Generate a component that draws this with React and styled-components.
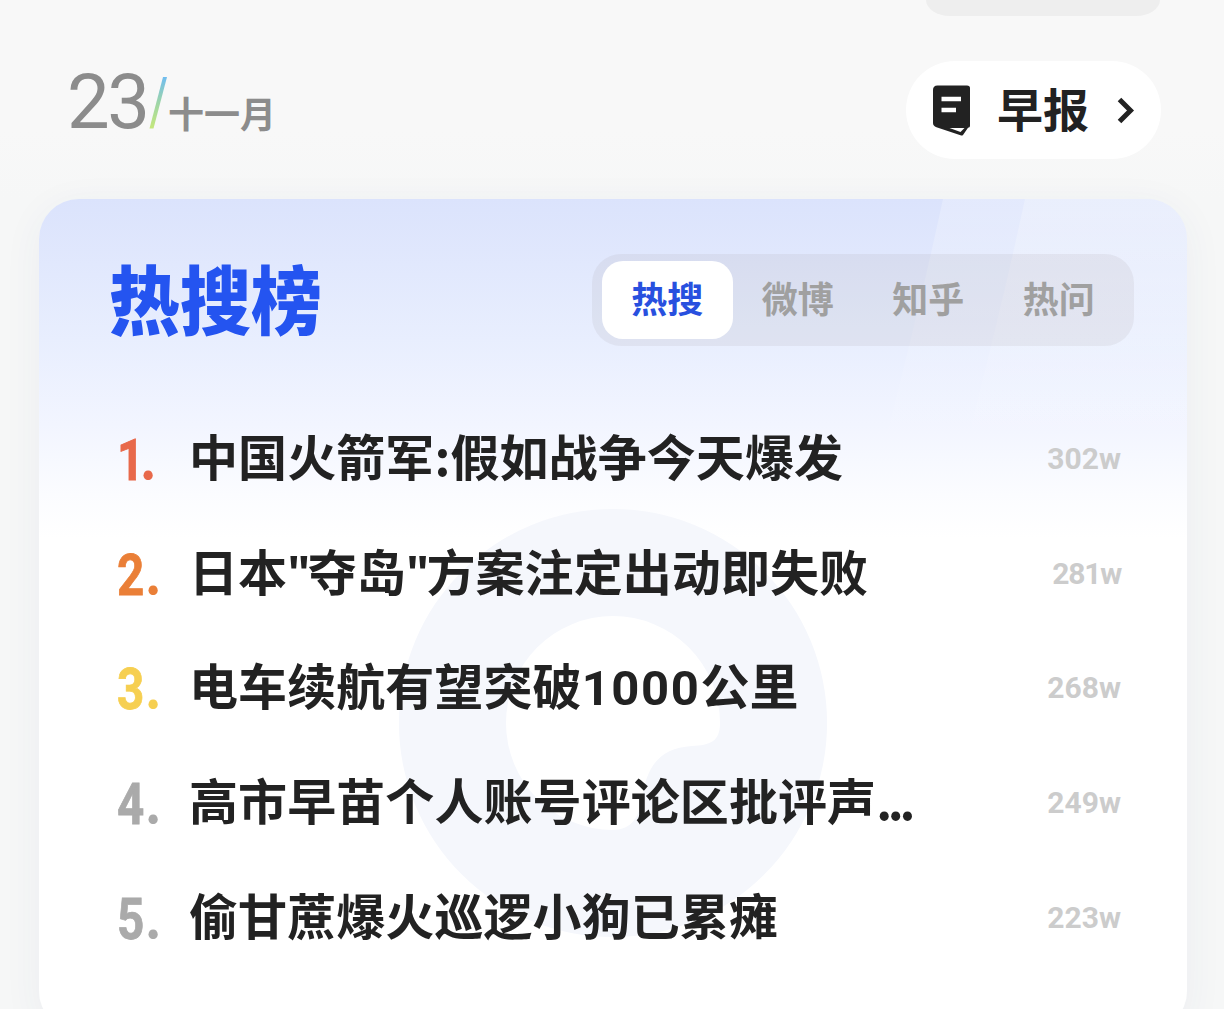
import React from "react";
import styled, { createGlobalStyle } from "styled-components";

const CJK = '"Noto Sans CJK SC", sans-serif';
const LATIN = 'Roboto, "Noto Sans CJK SC", sans-serif';

const GlobalStyle = createGlobalStyle`
  *, *::before, *::after { box-sizing: border-box; }
  body { margin: 0; background: #f7f7f7; overflow: hidden; }
`;

const Page = styled.div`
  height: 1009px;
  padding: 0 37px 0 39px;
  overflow: hidden;
  display: flex;
  flex-direction: column;
  background: linear-gradient(#f8f8f8 0, #f8f8f8 130px, #f6f7f7 199px, #f6f7f7 100%);
  font-family: ${CJK};
`;

const PreviousChip = styled.div`
  flex: none;
  align-self: flex-end;
  width: 234px;
  height: 16px;
  margin-right: 27px;
  border-radius: 0 0 24px 24px / 0 0 16px 16px;
  background: #eee;
`;

const Header = styled.header`
  flex: none;
  display: flex;
  justify-content: space-between;
  align-items: center;
  height: 98px;
  margin: 45px 26px 40px 28px;
`;

const DateGroup = styled.div`
  display: flex;
  align-items: center;
  height: 98px;
  color: #8c8c8c;
`;

const Day = styled.span`
  width: 82px;
  font: 400 76px/98px ${LATIN};
  letter-spacing: -2.5px;
  transform: translateY(-8.5px);
`;

const Slash = styled.svg`
  width: 18px;
  height: 54px;
  margin-top: -14px;
`;

const Month = styled.span`
  margin-left: 1px;
  font: 700 36px/54px ${CJK};
  padding-top: 4px;
`;

const MorningButton = styled.button`
  display: flex;
  align-items: center;
  width: 255px;
  height: 98px;
  padding: 0 26px;
  border: 0;
  border-radius: 49px;
  background: #fff;
  color: #222;
`;

const ButtonLabel = styled.span`
  margin: 0 0 6px 25px;
  font: 700 46px/60px ${CJK};
`;

const ChevronIcon = styled.svg`
  width: 18px;
  height: 28px;
  margin: 2px 0 0 auto;
`;

const Card = styled.section`
  position: relative;
  height: 832px;
  padding: 55px 53px 0 70px;
  border-radius: 40px;
  overflow: hidden;
  background: linear-gradient(#dbe3fc 0, #e8eefe 140px, #f2f5ff 225px, #fbfcff 295px, #fff 340px);
`;

const CardShadow = styled.div`
  flex: none;
  border-radius: 40px;
  box-shadow: 0 8px 40px rgba(60, 80, 120, 0.055);
`;

const Backdrop = styled.svg`
  position: absolute;
  inset: 0;
  width: 1148px;
  height: 850px;
`;

const CardHead = styled.div`
  position: relative;
  display: flex;
  justify-content: space-between;
  height: 92px;
`;

const Title = styled.h1`
  margin: 0;
  color: #2454f0;
  font: 900 71px/92px ${CJK};
  transform: translateY(-4px) scaleY(1.06);
`;

const Tabs = styled.nav`
  display: flex;
  width: 542px;
  height: 92px;
  padding: 7px 10px;
  border-radius: 29px;
  background: rgba(140, 130, 130, 0.105);
`;

const Tab = styled.button`
  flex: 1;
  height: 78px;
  padding: 0;
  border: 0;
  border-radius: 21px;
  background: ${({ $active }) => ($active ? "#fff" : "transparent")};
  color: ${({ $active }) => ($active ? "#2850df" : "#a0a0a0")};
  font: 700 36px/72px ${CJK};
  padding-bottom: 6px;
`;

const List = styled.ol`
  position: relative;
  margin: 56px 13px 0 8px;
  padding: 0;
  list-style: none;
`;

const Row = styled.li`
  display: grid;
  grid-template-columns: 72px 1fr auto;
  align-items: center;
  height: 114.6px;
`;

const Rank = styled.span`
  display: flex;
  align-items: baseline;
  color: ${({ $color }) => $color};
`;

const RankDigit = styled.span`
  width: ${({ $narrow }) => ($narrow ? "23px" : "28px")};
  font: 700 58px/70px ${LATIN};
  letter-spacing: ${({ $narrow }) => ($narrow ? "-6px" : "0")};
  -webkit-text-stroke: 0.8px currentColor;
  transform: translateY(1px) scaleX(0.82);
  transform-origin: left;
`;

const RankDot = styled.span`
  font: 700 50px/60px ${CJK};
`;

const Topic = styled.span`
  height: 70px;
  margin-bottom: 8px;
  color: #222;
  font: 700 49px/70px ${CJK};
  letter-spacing: 0.08px;
  white-space: nowrap;
`;

const Latin = styled.span`
  font-family: ${LATIN};
  line-height: 0;
  letter-spacing: 1.6px;
`;

const Quote = styled.span`
  font-family: "Open Sans", ${CJK};
  line-height: 0;
  letter-spacing: -2.6px;
`;

const Dots = styled.span`
  letter-spacing: -4.2px;
`;

const Heat = styled.span`
  color: #ccc;
  font: 700 30px/40px ${LATIN};
  letter-spacing: ${({ $tight }) => ($tight ? "-1.2px" : "0")};
`;

const tabs = ["热搜", "微博", "知乎", "热问"];

const topics = [
  { color: "#e8694b", title: "中国火箭军:假如战争今天爆发", heat: "302w" },
  { color: "#ea7f37", title: <>日本<Quote>"</Quote>夺岛<Quote>"</Quote>方案注定出动即失败</>, heat: "281w" },
  { color: "#f6cf51", title: <>电车续航有望突破<Latin>1000</Latin>公里</>, heat: "268w" },
  { color: "#aaa", title: <>高市早苗个人账号评论区批评声<Dots>...</Dots></>, heat: "249w" },
  { color: "#aaa", title: "偷甘蔗爆火巡逻小狗已累瘫", heat: "223w" },
];

function NewsIcon() {
  return (
    <svg width="40" height="52" viewBox="0 0 40 52">
      <path d="M5.500 1.500H35Q38 1.500 38 4V42Q38 43.500 36 43.700L31 51Q30 52 28.500 51.300L4.500 43.200Q1 42 1 39V6Q1 1.500 5.500 1.500Z" fill="#222" />
      <path d="M17.500 44.100H32.500L28.500 48Z" fill="#fff" />
      <path d="M9.500 15H29M9.500 26H24" stroke="#fff" strokeWidth="4.500" />
    </svg>
  );
}

function Chevron() {
  return (
    <ChevronIcon viewBox="0 0 18 28">
      <path d="M2.500 2.500 13.500 13.500 2.500 24.500" fill="none" stroke="#222" strokeWidth="5" />
    </ChevronIcon>
  );
}

export default function App() {
  return (
    <Page>
      <GlobalStyle />
      <PreviousChip />
      <Header>
        <DateGroup>
          <Day>23</Day>
          <Slash viewBox="0 0 18 54">
            <defs>
              <linearGradient id="slash" x1="0" y1="1" x2="0" y2="0">
                <stop stopColor="#c5e87b" />
                <stop offset=".5" stopColor="#9ed5a8" />
                <stop offset="1" stopColor="#70bdf0" />
              </linearGradient>
            </defs>
            <path d="M0.500 52.500 14 1H18L4.500 52.500Z" fill="url(#slash)" />
          </Slash>
          <Month>十一月</Month>
        </DateGroup>
        <MorningButton>
          <NewsIcon />
          <ButtonLabel>早报</ButtonLabel>
          <Chevron />
        </MorningButton>
      </Header>
      <CardShadow>
        <Card>
          <Backdrop viewBox="0 0 1148 850">
            <defs>
              <linearGradient id="band" x1="0" y1="0" x2="0" y2="1">
                <stop stopColor="#fff" stopOpacity=".24" />
                <stop offset="1" stopColor="#fff" stopOpacity="0" />
              </linearGradient>
            </defs>
            <path d="M904 0H1148V280H836Q876 130 904 0Z" fill="url(#band)" />
            <path d="M986 0H1148V280H918Q958 130 986 0Z" fill="url(#band)" />
            <path
              fillRule="evenodd"
              fill="#f5f7fc"
              d="M574 310A214 214 0 1 1 574 738A214 214 0 1 1 574 310ZM574 417A107 107 0 1 0 574 631C593 631 600 617 603 601C607 567 621 549 653 547C671 546 681 543 681 524A107 107 0 0 0 574 417Z"
            />
          </Backdrop>
          <CardHead>
            <Title>热搜榜</Title>
            <Tabs>
              {tabs.map((name, i) => (
                <Tab key={name} $active={i === 0}>{name}</Tab>
              ))}
            </Tabs>
          </CardHead>
          <List>
            {topics.map(({ color, title, heat }, i) => (
              <Row key={heat}>
                <Rank $color={color}>
                  <RankDigit $narrow={i === 0}>{i + 1}</RankDigit>
                  <RankDot>.</RankDot>
                </Rank>
                <Topic>{title}</Topic>
                <Heat $tight={heat === "281w"}>{heat}</Heat>
              </Row>
            ))}
          </List>
        </Card>
      </CardShadow>
    </Page>
  );
}
